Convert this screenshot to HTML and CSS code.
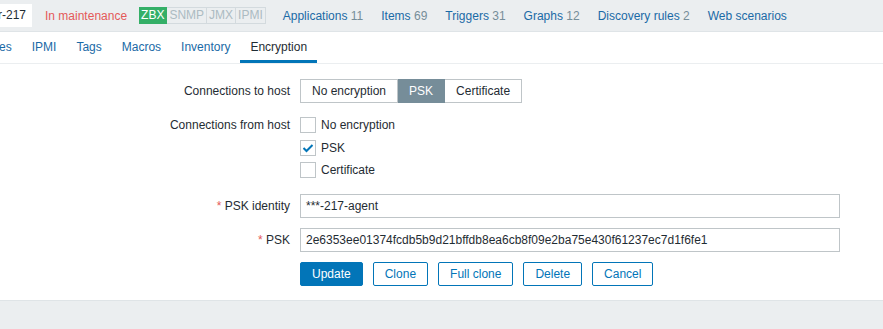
FILE: index.html
```html
<!DOCTYPE html>
<html lang="en">
<head>
    <meta charset="UTF-8">
    <meta name="viewport" content="width=device-width, initial-scale=1.0">
    <title>Host - Encryption</title>
    <link rel="stylesheet" href="styles.css">
</head>
<body>
    <div class="host-nav">
        <span class="host-name">r-217</span>
        <span class="maintenance">In maintenance</span>
        <span class="status-group">
            <span class="status on">ZBX</span><span class="status">SNMP</span><span class="status">JMX</span><span class="status">IPMI</span>
        </span>
        <a class="nav-link first" href="#">Applications <span class="count">11</span></a>
        <a class="nav-link" href="#">Items <span class="count">69</span></a>
        <a class="nav-link" href="#">Triggers <span class="count">31</span></a>
        <a class="nav-link" href="#">Graphs <span class="count">12</span></a>
        <a class="nav-link" href="#">Discovery rules <span class="count">2</span></a>
        <a class="nav-link" href="#">Web scenarios</a>
    </div>

    <ul class="tabs">
        <li><a href="#">Templates</a></li>
        <li><a href="#">IPMI</a></li>
        <li><a href="#">Tags</a></li>
        <li><a href="#">Macros</a></li>
        <li><a href="#">Inventory</a></li>
        <li class="active">Encryption</li>
    </ul>

    <form class="form">
        <div class="label">Connections to host</div>
        <div class="radio-group">
            <span class="radio">No encryption</span><span class="radio checked">PSK</span><span class="radio">Certificate</span>
        </div>

        <div class="label label-top">Connections from host</div>
        <ul class="checks">
            <li><span class="box"></span>No encryption</li>
            <li>
                <span class="box">
                    <svg width="14" height="14" viewBox="0 0 14 14"><polyline points="2.5,7 5.5,10 11.5,4" fill="none" stroke="#0275b8" stroke-width="2"/></svg>
                </span>PSK
            </li>
            <li><span class="box"></span>Certificate</li>
        </ul>

        <div class="label"><span class="req">*</span> PSK identity</div>
        <div class="input">***-217-agent</div>

        <div class="label"><span class="req">*</span> PSK</div>
        <div class="input">2e6353ee01374fcdb5b9d21bffdb8ea6cb8f09e2ba75e430f61237ec7d1f6fe1</div>

        <div></div>
        <div class="buttons">
            <button type="button" class="btn">Update</button>
            <button type="button" class="btn-alt">Clone</button>
            <button type="button" class="btn-alt">Full clone</button>
            <button type="button" class="btn-alt">Delete</button>
            <button type="button" class="btn-alt">Cancel</button>
        </div>
    </form>
</body>
</html>
```

FILE: styles.css
```css
body {
    margin: 0;
    background: #ebeef0;
    font-family: "Liberation Sans", Arial, sans-serif;
    font-size: 12px;
    color: #1f2c33;
    overflow: hidden;
}
a { color: #1a6aa6; text-decoration: none; }

.host-nav {
    display: flex;
    align-items: center;
    height: 31px;
    border-bottom: 1px solid #dfe4e7;
    white-space: nowrap;
}
.host-name {
    background: #fff;
    margin-left: -8px;
    padding: 0 6px;
    line-height: 23px;
}
.maintenance {
    color: #e45959;
    margin-left: 13px;
}
.status-group {
    display: flex;
    margin-left: 12px;
}
.status {
    padding: 0 2px;
    line-height: 15px;
    border: 1px solid #d3dade;
    border-left: none;
    color: #acbbc2;
}
.status.on {
    background: #34af67;
    border-color: #34af67;
    color: #fff;
}
.nav-link { margin-left: 18px; }
.nav-link.first { margin-left: 17px; }
.count { color: #768d99; }

.tabs {
    display: flex;
    list-style: none;
    margin: 0;
    padding: 0;
    background: #fff;
    border-bottom: 1px solid #ebeef0;
    height: 31px;
}
.tabs li {
    padding: 0 10px;
    line-height: 31px;
    white-space: nowrap;
}
.tabs li:first-child { margin-left: -53px; }
.tabs li.active {
    box-shadow: inset 0 -3px 0 #0275b8;
}

.form {
    background: #fff;
    display: grid;
    grid-template-columns: 290px 540px;
    column-gap: 10px;
    row-gap: 10px;
    padding: 15px 0 14px;
    border-bottom: 1px solid #dfe4e7;
}
.label {
    text-align: right;
    line-height: 24px;
    white-space: nowrap;
}
.label-top {
    line-height: 16px;
    margin-top: 4px;
}
.req { color: #e45959; }

.radio-group {
    display: flex;
}
.radio {
    border: 1px solid #bfc5c8;
    border-left: none;
    padding: 0 11px;
    line-height: 22px;
}
.radio:first-child { border-left: 1px solid #bfc5c8; }
.radio.checked {
    background: #768d99;
    border-color: #768d99;
    color: #fff;
}

.checks {
    list-style: none;
    margin: 4px 0 6px;
    padding: 0;
    display: flex;
    flex-direction: column;
    gap: 6.5px;
}
.checks li {
    display: flex;
    align-items: center;
    height: 16px;
}
.box {
    width: 14px;
    height: 14px;
    border: 1px solid #bfc5c8;
    margin-right: 5px;
    display: flex;
}

.input {
    border: 1px solid #bfc5c8;
    padding: 0 5px;
    line-height: 22px;
    white-space: nowrap;
}

.buttons {
    display: flex;
    gap: 10px;
}
.btn, .btn-alt {
    font-family: inherit;
    font-size: 12px;
    height: 24px;
    padding: 0 11px;
    border: 1px solid #0275b8;
    border-radius: 2px;
    background: #0275b8;
    color: #fff;
}
.btn-alt {
    background: #fff;
    color: #0275b8;
}
```
